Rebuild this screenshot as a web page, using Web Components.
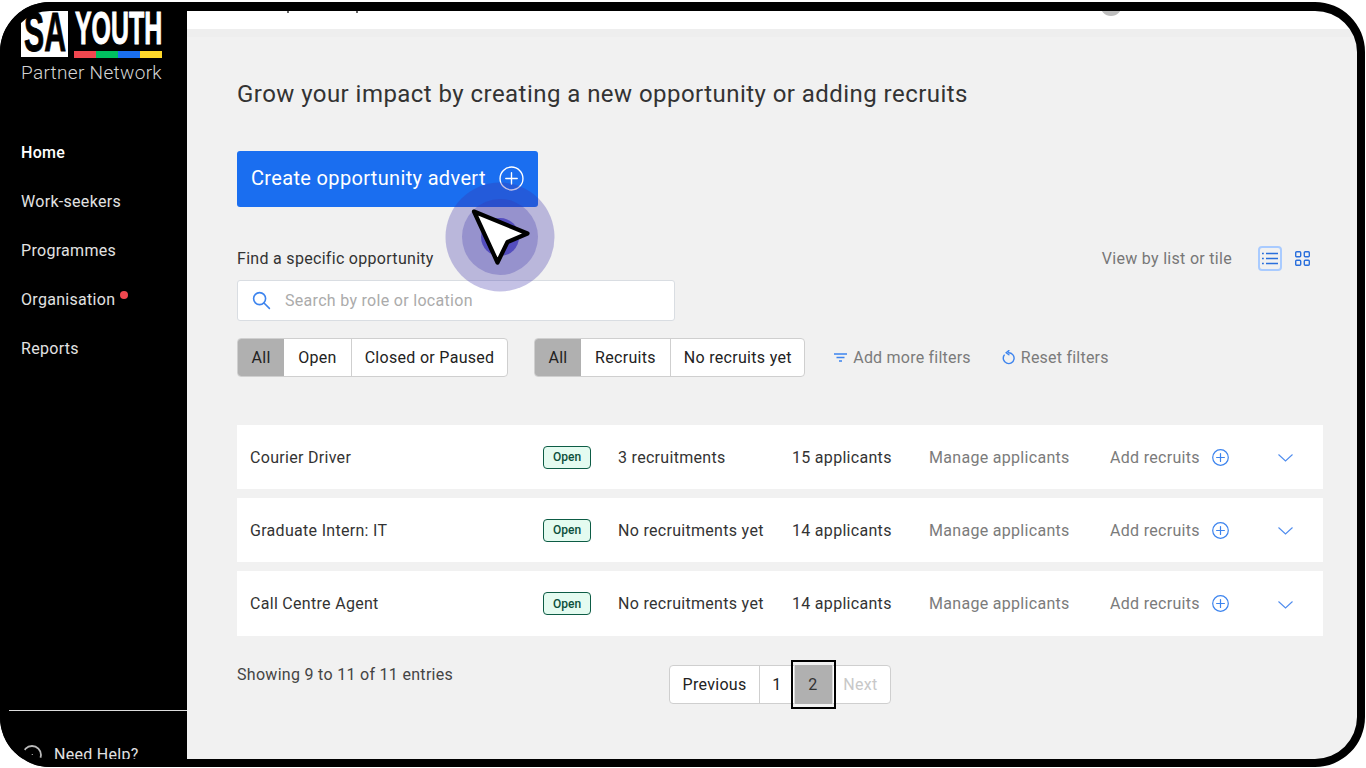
<!DOCTYPE html>
<html lang="en">
<head>
<meta charset="utf-8">
<title>SA Youth Partner Network</title>
<style>
html, body { margin: 0; padding: 0; background: #fff; }
body { font-family: Roboto, "Liberation Sans", sans-serif; overflow: hidden; letter-spacing: .3px; }
</style>
</head>
<body>
<sa-app>
  <sa-sidebar slot="side"></sa-sidebar>
  <sa-topbar slot="top"></sa-topbar>

  <sa-toolbar>
    <sa-segments first="All" items="Open,Closed or Paused" slot="seg1"></sa-segments>
    <sa-segments first="All" items="Recruits,No recruits yet" slot="seg2"></sa-segments>
  </sa-toolbar>

  <sa-job-list>
    <sa-job-row title="Courier Driver" recruits="3 recruitments" applicants="15 applicants"></sa-job-row>
    <sa-job-row title="Graduate Intern: IT" recruits="No recruitments yet" applicants="14 applicants"></sa-job-row>
    <sa-job-row title="Call Centre Agent" recruits="No recruitments yet" applicants="14 applicants" tall></sa-job-row>
  </sa-job-list>

  <sa-pager></sa-pager>
</sa-app>
<sa-click-marker></sa-click-marker>
<sa-frame></sa-frame>

<script>
const PLUS_ICON = (size, color, sw) => `
<svg width="${size}" height="${size}" viewBox="0 0 24 24" fill="none" stroke="${color}" stroke-width="${sw}" stroke-linecap="round">
  <circle cx="12" cy="12" r="11"/><path d="M12 6.5v11M6.500 12h11"/>
</svg>`;

//outer layout: sidebar on the left, page content on the right
class SaApp extends HTMLElement {
  constructor() {
    super();
    this.attachShadow({ mode: "open" });
    this.shadowRoot.innerHTML = `
<style>
:host { display: flex; width: 1366px; height: 768px; overflow: hidden; background: #f1f1f1; color: #333; }
.main { flex: 1; min-width: 0; display: flex; flex-direction: column; }
.content { padding: 41px 43px 0 50px; display: flex; flex-direction: column; }
h1 { margin: 0; font-size: 24px; line-height: 32px; font-weight: 400; color: #333; letter-spacing: .45px; }
.create {
  margin-top: 41px; align-self: flex-start; box-sizing: border-box; width: 301px; height: 56px;
  display: flex; align-items: center; gap: 13px; padding: 0 0 3px 14px; border: 0; border-radius: 3px;
  background: #1a6ef0; color: #fff; font: 400 20px Roboto, sans-serif; letter-spacing: .34px;
}
.create svg { display: block; margin-top: 3px; position: relative; top: -1px; }
.find { margin-top: 41px; display: flex; justify-content: space-between; align-items: center; height: 20px; font-size: 16px; }
.view { display: flex; align-items: center; color: #777; }
.view .list { box-sizing: border-box; margin-left: 26px; width: 24px; height: 25px; border: 2px solid #a9cbff; border-radius: 4px; display: grid; place-items: center; }
.view .grid { margin: 0 13px 0 13px; display: block; }
.search {
  margin-top: 12px; box-sizing: border-box; width: 438px; height: 41px; background: #fff;
  border: 1px solid #d9dde2; border-radius: 3px; display: flex; align-items: center; padding-left: 14px;
  color: #ababab; font-size: 16px;
}
.search svg { margin-right: 14px; }
</style>
<slot name="side"></slot>
<div class="main">
  <slot name="top"></slot>
  <div class="content">
    <h1>Grow your impact by creating a new opportunity or adding recruits</h1>
    <button class="create">Create opportunity advert ${PLUS_ICON(25, "#fff", 1.3)}</button>
    <div class="find">
      <span>Find a specific opportunity</span>
      <div class="view">
        <span>View by list or tile</span>
        <span class="list">
          <svg width="16" height="13" viewBox="0 0 16 13" fill="none" stroke="#2a6fdc" stroke-width="1.4">
            <path d="M4 1.500h12M4 6.500h12M4 11.500h12"/><path d="M0 1.500h1.800M0 6.500h1.800M0 11.500h1.800"/>
          </svg>
        </span>
        <svg class="grid" width="15" height="15" viewBox="0 0 15 15" fill="none" stroke="#2a6fdc" stroke-width="1.4">
          <rect x=".7" y=".7" width="5" height="5" rx="1"/><rect x="9.3" y=".7" width="5" height="5" rx="1"/>
          <rect x=".7" y="9.3" width="5" height="5" rx="1"/><rect x="9.3" y="9.3" width="5" height="5" rx="1"/>
        </svg>
      </div>
    </div>
    <div class="search">
      <svg width="19" height="19" viewBox="0 0 19 19" fill="none" stroke="#3d84ee" stroke-width="1.6" stroke-linecap="round">
        <circle cx="7.600" cy="7.600" r="6"/><path d="M12 12l5.400 5.400"/>
      </svg>
      <span>Search by role or location</span>
    </div>
    <slot></slot>
  </div>
</div>`;
  }
}

class SaSidebar extends HTMLElement {
  constructor() {
    super();
    this.attachShadow({ mode: "open" });
    const items = ["Home", "Work-seekers", "Programmes", "Organisation", "Reports"];
    this.shadowRoot.innerHTML = `
<style>
:host { display: flex; flex-direction: column; flex: none; width: 187px; height: 768px; background: #000; color: #e2e2e2; overflow: hidden; box-sizing: border-box; padding-top: 11px; }
.logo { padding-left: 21px; }
.brand { display: flex; height: 47px; }
.sa { box-sizing: border-box; width: 47px; height: 46px; background: #fff; color: #000; font: 700 56px/42px "Liberation Sans", sans-serif; letter-spacing: 0; -webkit-text-stroke: 1px #000; }
.sa span, .youth span { display: block; transform-origin: 0 50%; white-space: nowrap; }
.sa span { transform: translateX(3px) scaleX(.54); }
.wrap { margin-left: 6px; width: 88px; }
.youth { height: 35px; color: #fff; font: 700 47px/33px "Liberation Sans", sans-serif; letter-spacing: 0; -webkit-text-stroke: 1px #fff; }
.youth span { transform: translateX(1px) scaleX(.53); }
.bar { margin-top: 5px; height: 7px; display: flex; width: 88px; }
.bar i { flex: 1; }
.pn { margin-top: 4px; font-size: 19px; line-height: 22px; font-weight: 300; color: #d4d4d4; letter-spacing: .32px; white-space: nowrap; }
nav { margin-top: 57px; display: flex; flex-direction: column; gap: 25px; padding-left: 21px; font-size: 16px; line-height: 24px; }
nav a { position: relative; align-self: flex-start; }
nav a.on { color: #fff; font-weight: 500; }
nav a.dot::after { content: ""; position: absolute; right: -13px; top: 3px; width: 8px; height: 8px; border-radius: 50%; background: #f0474f; }
.help { margin: 349px 0 0 9px; border-top: 1px solid #ddd; padding: 32px 0 0 13px; display: flex; align-items: center; gap: 12px; font-size: 16px; line-height: 24px; }
</style>
<div class="logo">
  <div class="brand">
    <div class="sa"><span>SA</span></div>
    <div class="wrap">
      <div class="youth"><span>YOUTH</span></div>
      <div class="bar"><i style="background:#f0474f"></i><i style="background:#00c060"></i><i style="background:#1a6ff0"></i><i style="background:#ffd92a"></i></div>
    </div>
  </div>
  <div class="pn">Partner Network</div>
</div>
<nav>
  ${items.map((t, i) => `<a class="${i === 0 ? "on" : ""} ${t === "Organisation" ? "dot" : ""}">${t}</a>`).join("")}
</nav>
<div class="help">
  <svg width="20" height="20" viewBox="0 0 20 20" fill="none" stroke="#bbb" stroke-width="1.8"><circle cx="10" cy="10" r="9"/><circle cx="10" cy="10" r="1" fill="#fff" stroke="none"/></svg>
  <span>Need Help?</span>
</div>`;
  }
}

//white bar at the top, mostly hidden behind the frame
class SaTopbar extends HTMLElement {
  constructor() {
    super();
    this.attachShadow({ mode: "open" });
    this.shadowRoot.innerHTML = `
<style>
:host { display: block; flex: none; height: 37px; box-sizing: border-box; background: #fff; border-bottom: 8px solid #eeeeee; position: relative; }
.avatar { position: absolute; left: 913px; top: -6px; width: 22px; height: 22px; border-radius: 50%; background: #bdbdbd; }
.speck { position: absolute; top: 11px; width: 2px; height: 2px; background: #666; }
</style>
<i class="speck" style="left:100px"></i>
<i class="speck" style="left:169px"></i>
<div class="avatar"></div>`;
  }
}

class SaToolbar extends HTMLElement {
  constructor() {
    super();
    this.attachShadow({ mode: "open" });
    this.shadowRoot.innerHTML = `
<style>
:host { display: flex; align-items: center; margin-top: 17px; height: 39px; color: #7b7b7b; font-size: 16px; }
::slotted([slot="seg2"]) { margin-left: 26px; }
.link { display: flex; align-items: center; gap: 6px; letter-spacing: .22px; }
.add { margin-left: 29px; }
.reset { margin-left: 31px; }
</style>
<slot name="seg1"></slot>
<slot name="seg2"></slot>
<div class="link add">
  <svg width="13" height="9" viewBox="0 0 13 9" fill="none" stroke="#3d84ee" stroke-width="1.3"><path d="M0 1h13M2.500 4.500h8M5 8h3"/></svg>
  <span>Add more filters</span>
</div>
<div class="link reset">
  <svg width="13" height="15" viewBox="0 0 13 15" fill="none" stroke="#3d84ee" stroke-width="1.4" stroke-linecap="round"><path d="M2.200 5.200A5.400 5.400 0 1 0 6.500 2.800"/><path d="M6.900.6L4.200 2.800l2.700 2"/></svg>
  <span>Reset filters</span>
</div>`;
  }
}

class SaSegments extends HTMLElement {
  constructor() {
    super();
    this.attachShadow({ mode: "open" });
    this.shadowRoot.innerHTML = `
<style>
:host { display: inline-flex; box-sizing: border-box; height: 39px; border: 1px solid #cfcfcf; border-radius: 4px; background: #fff; color: #222; font-size: 16px; overflow: hidden; }
span { display: flex; align-items: center; padding: 0 14px; }
span + span { border-left: 1px solid #cfcfcf; }
span:last-child { padding: 0 12.5px 0 13px; }
.on { background: #b0b0b0; padding: 0 13.5px; }
.on + span { border-left: 0; }
</style>`;
  }
  connectedCallback() {
    const first = document.createElement("span");
    first.className = "on";
    first.textContent = this.getAttribute("first");
    this.shadowRoot.appendChild(first);
    this.getAttribute("items").split(",").forEach(t => {
      const s = document.createElement("span");
      s.textContent = t;
      this.shadowRoot.appendChild(s);
    });
  }
}

class SaJobList extends HTMLElement {
  constructor() {
    super();
    this.attachShadow({ mode: "open" });
    this.shadowRoot.innerHTML = `
<style>
:host { display: flex; flex-direction: column; gap: 9px; margin-top: 48px; }
</style>
<slot></slot>`;
  }
}

const rowTemplate = document.createElement("template");
rowTemplate.innerHTML = `
<style>
:host { display: grid; grid-template-columns: 293px 75px 174px 137px 181px 102px 1fr; align-items: center; height: 64px; padding-left: 13px; background: #fff; color: #333; font-size: 16px; }
:host([tall]) { height: 65px; }
.badge { justify-self: start; box-sizing: border-box; width: 48px; height: 23px; border: 1px solid #0d5c45; border-radius: 4px; background: #e4fbf0; color: #0b4f3c; font-size: 12px; font-weight: 500; letter-spacing: 0; display: grid; place-items: center; }
.muted { color: #7b7b7b; }
svg { display: block; }
</style>
<span id="title"></span>
<span class="badge">Open</span>
<span id="recruits"></span>
<span id="applicants"></span>
<span class="muted">Manage applicants</span>
<span class="muted">Add recruits</span>
<span id="actions"></span>`;

class SaJobRow extends HTMLElement {
  constructor() {
    super();
    this.attachShadow({ mode: "open" });
    this.shadowRoot.appendChild(rowTemplate.content.cloneNode(true));
  }
  connectedCallback() {
    this.shadowRoot.querySelector("#title").textContent = this.getAttribute("title");
    this.shadowRoot.querySelector("#recruits").textContent = this.getAttribute("recruits");
    this.shadowRoot.querySelector("#applicants").textContent = this.getAttribute("applicants");
    this.shadowRoot.querySelector("#actions").innerHTML = `
      <div style="display:flex;align-items:center">
        ${PLUS_ICON(17, "#3d84ee", 1.7)}
        <svg style="margin:2px 0 0 49px" width="15" height="8" viewBox="0 0 15 8" fill="none" stroke="#4f8cee" stroke-width="1.1"><path d="M.5.5l7 6.500 7-6.500"/></svg>
      </div>`;
    this.removeAttribute("title");
  }
}

class SaPager extends HTMLElement {
  constructor() {
    super();
    this.attachShadow({ mode: "open" });
    this.shadowRoot.innerHTML = `
<style>
:host { display: flex; margin-top: 29px; font-size: 16px; color: #444; }
.info { width: 432px; line-height: 20px; }
.pages { display: flex; box-sizing: border-box; height: 39px; border: 1px solid #cfcfcf; border-radius: 4px; background: #fff; color: #222; }
.pages span { display: flex; align-items: center; justify-content: center; box-sizing: border-box; }
.prev { width: 90px; border-right: 1px solid #cfcfcf; }
.one { width: 34px; }
.cur { position: relative; width: 39px; padding-right: 1px; background: #b0b0b0; color: #333; border-left: 1px solid #dcdcdc; border-right: 1px solid #dcdcdc; margin: -1px 0; }
.cur::after { content: ""; position: absolute; inset: -5px -4px; border: 2px solid #000; }
.next { flex: 1; width: 57px; padding-right: 2px; color: #c8c8c8; }
</style>
<div class="info">Showing 9 to 11 of 11 entries</div>
<div class="pages">
  <span class="prev">Previous</span><span class="one">1</span><span class="cur">2</span><span class="next">Next</span>
</div>`;
  }
}

//recording overlay: click rings and arrow pointer
class SaClickMarker extends HTMLElement {
  constructor() {
    super();
    this.attachShadow({ mode: "open" });
    this.shadowRoot.innerHTML = `
<style>
:host { position: absolute; left: 440px; top: 177px; width: 120px; height: 120px; pointer-events: none; }
</style>
<svg width="120" height="120" viewBox="0 0 120 120">
  <circle cx="60" cy="60" r="54.500" fill="#3a32a8" fill-opacity=".3"/>
  <circle cx="60" cy="60" r="38" fill="#3a32a8" fill-opacity=".28"/>
  <circle cx="60" cy="60" r="19" fill="#3a32b8" fill-opacity=".72"/>
  <path d="M34 34.500L87.500 56.500L67.500 65L57.500 85.500Z" fill="#fff" stroke="#000" stroke-width="4.200" stroke-linejoin="round"/>
</svg>`;
  }
}

//black rounded device bezel with white outside the corners
class SaFrame extends HTMLElement {
  constructor() {
    super();
    this.attachShadow({ mode: "open" });
    this.shadowRoot.innerHTML = `
<style>
:host { position: absolute; left: 0; top: 0; width: 1366px; height: 768px; overflow: hidden; pointer-events: none; }
div { position: absolute; left: 0; top: 2px; width: 1365px; height: 765px; box-sizing: border-box; border: solid #000; border-width: 9px 8px 8px 9px; border-radius: 50px; box-shadow: 0 0 0 40px #fff; }
</style>
<div></div>`;
  }
}

customElements.define("sa-app", SaApp);
customElements.define("sa-sidebar", SaSidebar);
customElements.define("sa-topbar", SaTopbar);
customElements.define("sa-toolbar", SaToolbar);
customElements.define("sa-segments", SaSegments);
customElements.define("sa-job-list", SaJobList);
customElements.define("sa-job-row", SaJobRow);
customElements.define("sa-pager", SaPager);
customElements.define("sa-click-marker", SaClickMarker);
customElements.define("sa-frame", SaFrame);
</script>
</body>
</html>
